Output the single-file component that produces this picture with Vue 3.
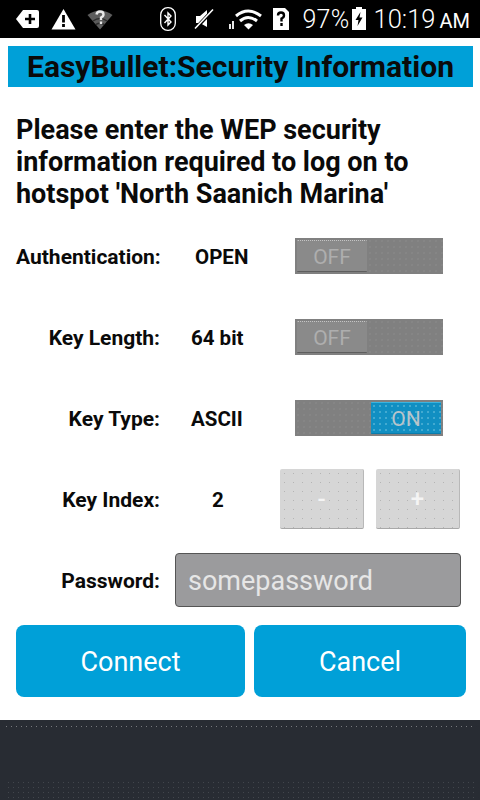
<template>
  <div class="screen">
    <!-- status bar -->
    <div class="status-bar">
      <div class="status-left">
        <svg class="ic-tag" width="25" height="20" viewBox="0 0 25 20">
          <path d="M8 1H22Q24 1 24 3V17Q24 19 22 19H8L1 10Z" fill="#fff"/>
          <path d="M15 5V15M10 10H20" stroke="#000" stroke-width="2.6"/>
        </svg>
        <svg class="ic-warn" width="25" height="22" viewBox="0 0 25 22">
          <path d="M12.5 1L24.5 21.500H.5Z" fill="#fff"/>
          <path d="M12.500 7V14.500M12.500 16V19" stroke="#000" stroke-width="2.800"/>
        </svg>
        <svg class="ic-wifi-q" width="26" height="21" viewBox="0 0 26 21">
          <path d="M13 20.500L.5 6Q13-3 25.500 6Z" fill="#5c5c5c"/>
          <path d="M6 12Q13 7 20 12" fill="none" stroke="#2e2e2e" stroke-width="1.500"/>
          <path d="M9 15.500Q13 13 17 15.500" fill="none" stroke="#2e2e2e" stroke-width="1.500"/>
          <path d="M9.500 5.500Q10 2.500 13 2.500Q16.500 2.500 16.500 5.500Q16.500 7.500 14 8.500V11M14 12.500V15" fill="none" stroke="#e8e8e8" stroke-width="2.400"/>
        </svg>
      </div>
      <div class="status-right">
        <svg class="ic-bt" width="16" height="24" viewBox="0 0 16 24">
          <rect x=".7" y=".7" width="14.600" height="22.600" rx="7" fill="#000" stroke="#fff" stroke-width="1.300"/>
          <path d="M4.500 8L11 15L8 18V6L11 9L4.500 16" fill="none" stroke="#fff" stroke-width="1.400"/>
        </svg>
        <svg class="ic-mute" width="21" height="22" viewBox="0 0 21 22">
          <path d="M2 8H6L13 2V19L6 15H2Z" fill="#fff"/>
          <path d="M1 21L19 2" stroke="#000" stroke-width="3.500"/>
          <path d="M1 20.500L19 1.500" stroke="#fff" stroke-width="1.600"/>
        </svg>
        <svg class="ic-wifi" width="34" height="22" viewBox="0 0 34 22">
          <path d="M2 16V21M5 13V21" stroke="#fff" stroke-width="1.800"/>
          <path d="M8 8Q20-2 33 8" fill="none" stroke="#fff" stroke-width="3"/>
          <path d="M12 13Q20 6 29 13" fill="none" stroke="#fff" stroke-width="3"/>
          <path d="M16 17Q20.500 13.500 25 17L20.500 21.500Z" fill="#fff"/>
        </svg>
        <svg class="ic-sim" width="16" height="22" viewBox="0 0 16 22">
          <path d="M0 0H12L16 4V22H0Z" fill="#fff"/>
          <path d="M5 7.500Q5 4.500 8 4.500Q11 4.500 11 7.500Q11 9.500 8.500 10.500V13.500M8.500 15V18" fill="none" stroke="#000" stroke-width="2.400"/>
        </svg>
        <span class="pct">97%</span>
        <svg class="ic-batt" width="14" height="23" viewBox="0 0 14 23">
          <path d="M4 0H10V2H14V23H0V2H4Z" fill="#fff"/>
          <path d="M8.500 5L3.500 13H6.500L5.500 19L10.500 10.500H7.500Z" fill="#000"/>
        </svg>
        <span class="clock">10:19<small>AM</small></span>
      </div>
    </div>

    <!-- dialog -->
    <div class="dialog">
      <h1 class="title">EasyBullet:Security Information</h1>
      <p class="intro">
        Please enter the WEP security<br>
        information required to log on to<br>
        hotspot 'North Saanich Marina'
      </p>

      <div class="form">
        <div v-for="row in toggleRows" :key="row.label" class="row">
          <label class="label">{{ row.label }}</label>
          <span class="value" :class="row.valueClass">{{ row.value }}</span>
          <div class="toggle" :class="{ on: row.on }">
            <div class="knob">{{ row.on ? 'ON' : 'OFF' }}</div>
          </div>
        </div>

        <div class="row">
          <label class="label">Key Index:</label>
          <span class="value index">2</span>
          <div class="steppers">
            <button class="step">-</button>
            <button class="step">+</button>
          </div>
        </div>

        <div class="row">
          <label class="label">Password:</label>
          <div class="password">somepassword</div>
        </div>
      </div>

      <div class="actions">
        <button class="action connect">Connect</button>
        <button class="action cancel">Cancel</button>
      </div>
    </div>

    <!-- bottom strip -->
    <div class="bottom">
      <div class="dots-top"></div>
      <div class="dots-bottom"></div>
    </div>
  </div>
</template>

<script setup>
const toggleRows = [
  { label: 'Authentication:', value: 'OPEN', valueClass: 'open', on: false },
  { label: 'Key Length:', value: '64 bit', valueClass: '', on: false },
  { label: 'Key Type:', value: 'ASCII', valueClass: '', on: true }
]
</script>

<style>
html, body {
  margin: 0;
  background: #fff;
}
</style>

<style scoped>
.screen {
  width: 480px;
  height: 800px;
  display: flex;
  flex-direction: column;
  overflow: hidden;
  font-family: Roboto, "Liberation Sans", sans-serif;
  background: #fff;
}

/* status bar */
.status-bar {
  height: 38px;
  flex: none;
  background: #000;
  color: #fff;
  display: flex;
  justify-content: space-between;
  align-items: center;
}

.status-left {
  display: flex;
  align-items: center;
  gap: 11px;
  padding-left: 15px;
}

.status-right {
  display: flex;
  align-items: center;
  padding-right: 10px;
}

.ic-mute { margin-left: 18px; }
.ic-wifi { margin-left: 13px; }
.ic-sim { margin-left: 11px; }
.ic-batt { margin-left: 2px; margin-top: -2px; }

.pct {
  margin-left: 13px;
  font-size: 25px;
  font-weight: 300;
  letter-spacing: .3px;
}

.clock {
  margin-left: 8px;
  font-size: 25.500px;
  font-weight: 300;
  white-space: pre;
}

.clock small {
  margin-left: 4px;
  font-size: 20px;
  font-weight: 400;
}

/* dialog */
.dialog {
  height: 682px;
  flex: none;
  box-sizing: border-box;
  padding-top: 8px;
}

.title {
  margin: 0 7px 0 8px;
  height: 41px;
  background: #00a0d8;
  color: #0a0a0a;
  font-size: 30px;
  font-weight: 700;
  line-height: 42px;
  text-align: center;
  white-space: nowrap;
}

.intro {
  margin: 27px 0 6px 16px;
  font-size: 27px;
  font-weight: 700;
  line-height: 32px;
  color: #0a0a0a;
  white-space: nowrap;
}

.form {
  display: flex;
  flex-direction: column;
  gap: 1px;
}

.row {
  height: 80px;
  display: flex;
  align-items: center;
}

.label {
  width: 144px;
  margin-left: 16px;
  padding-top: 2px;
  text-align: right;
  font-size: 21px;
  font-weight: 700;
  color: #0a0a0a;
  white-space: nowrap;
}

.value {
  width: 104px;
  margin-left: 31px;
  padding-top: 2px;
  font-size: 20.500px;
  font-weight: 700;
  color: #0a0a0a;
}

.value.open {
  width: 100px;
  margin-left: 35px;
}

.value.index {
  width: 68px;
  margin-left: 52px;
}

.toggle {
  width: 148px;
  height: 36px;
  box-sizing: border-box;
  padding: 2px;
  display: flex;
  background-color: #808080;
  background-image: radial-gradient(circle at center, #888 .6px, transparent 1px);
  background-size: 6px 6px;
}

.toggle.on {
  justify-content: flex-end;
}

.knob {
  width: 70px;
  height: 32px;
  box-sizing: border-box;
  padding-top: 1px;
  border-top: 1px dotted #c4c4c4;
  border-bottom: 1px solid #5e5e5e;
  border-radius: 1px;
  background: #8a8a8a;
  color: #aeaeae;
  font-size: 21px;
  line-height: 30px;
  text-align: center;
}

.on .knob {
  border-top: 1px solid #3ab4e0;
  border-bottom: 1px solid #0a7cab;
  background-color: #118fc2;
  background-image: radial-gradient(circle at center, #54b4d6 .6px, transparent 1px);
  background-size: 6px 6px;
  color: #b8c4ca;
}

.steppers {
  display: flex;
  gap: 12px;
}

.step {
  width: 84px;
  height: 60px;
  padding: 0;
  border: none;
  border-bottom: 1px solid #a8a8a8;
  border-right: 1px solid #b8b8b8;
  border-radius: 2px;
  background-color: #d6d6d6;
  background-image: radial-gradient(circle at center, #b4b4b4 .6px, transparent 1px);
  background-size: 9px 9px;
  color: #f4f4f4;
  font-family: inherit;
  font-size: 24px;
  font-weight: 500;
}

.password {
  width: 286px;
  height: 54px;
  margin-left: 15px;
  box-sizing: border-box;
  padding-left: 12px;
  border: 1px solid #555;
  border-radius: 4px;
  background: #9b9b9d;
  color: #e6e6e6;
  font-size: 27px;
  line-height: 54px;
}

.actions {
  display: flex;
  gap: 9px;
  margin: 5px 14px 0 16px;
}

.action {
  height: 72px;
  padding: 2px 0 0;
  border: none;
  border-radius: 8px;
  background: #00a0d8;
  color: #fff;
  font-family: inherit;
  font-size: 27px;
}

.connect { width: 229px; }
.cancel { width: 212px; }

/* bottom strip */
.bottom {
  flex: 1;
  background: #282c33;
  display: flex;
  flex-direction: column;
  justify-content: space-between;
  padding-top: 6px;
}

.dots-top {
  height: 1px;
  margin: 0 6px;
  background-image: repeating-linear-gradient(90deg, #77797d 0 1px, transparent 1px 5px);
}

.dots-bottom {
  height: 20px;
  margin: 0 6px;
  background-image: radial-gradient(circle at center, #42464c .6px, transparent 1px);
  background-size: 5px 5px;
}
</style>
